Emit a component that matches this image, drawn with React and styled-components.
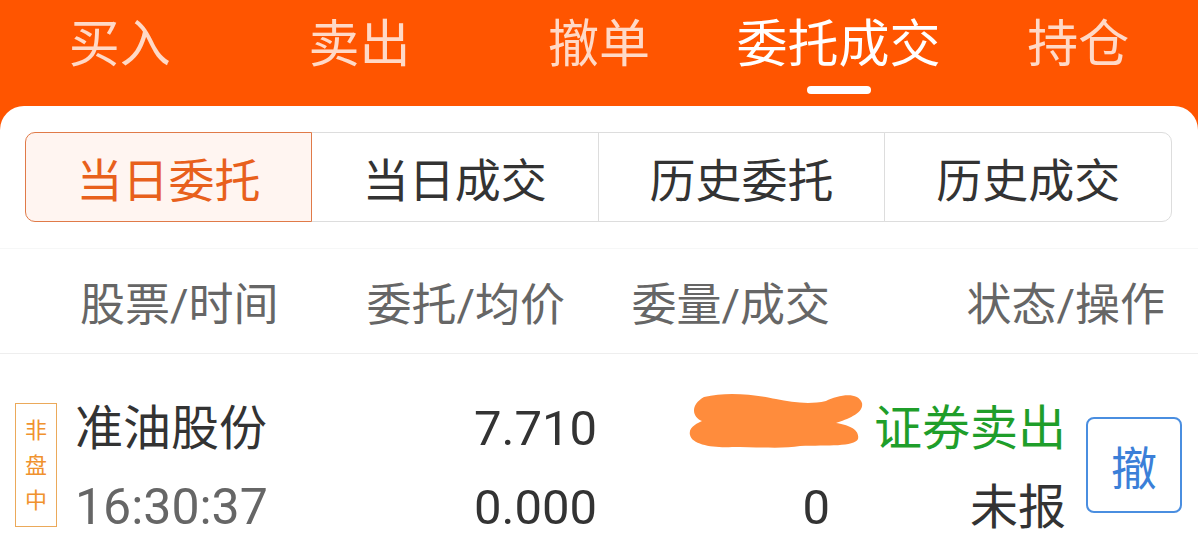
import React from 'react'
import styled, { createGlobalStyle } from 'styled-components'

const GlobalStyle = createGlobalStyle`
  html, body {
    margin: 0;
    padding: 0;
    background: #ffffff;
  }
  body {
    font-family: Roboto, "Noto Sans CJK SC", sans-serif;
  }
`

const Page = styled.div`
  width: 1198px;
  height: 558px;
  overflow: hidden;
  background: #ff5500;
  display: flex;
  flex-direction: column;
`

const TopTabs = styled.div`
  display: grid;
  grid-template-columns: repeat(5, 1fr);
  height: 106px;
  flex-shrink: 0;
`

const TopTab = styled.div`
  display: flex;
  flex-direction: column;
  align-items: center;
  padding-top: 20px;
  color: ${p => (p.active ? '#ffffff' : 'rgba(255, 255, 255, 0.78)')};
  font-size: 51px;
  line-height: 50px;
`

const Indicator = styled.div`
  margin-top: 16px;
  width: 64px;
  height: 8px;
  border-radius: 4px;
  background: ${p => (p.visible ? '#ffffff' : 'transparent')};
`

const Card = styled.div`
  flex: 1;
  background: #ffffff;
  border-radius: 24px 24px 0 0;
  display: flex;
  flex-direction: column;
`

const SegmentWrap = styled.div`
  padding: 26px 26px 26px 25px;
`

const Segments = styled.div`
  display: grid;
  grid-template-columns: repeat(4, 1fr);
  height: 90px;
`

const Segment = styled.div`
  display: flex;
  align-items: center;
  justify-content: center;
  font-size: 46px;
  color: ${p => (p.active ? '#e8601c' : '#333333')};
  background: ${p => (p.active ? '#fff5f1' : '#ffffff')};
  border: 1px solid ${p => (p.active ? '#e07a48' : '#dddddd')};
  margin-left: ${p => (p.first ? '0' : '-1px')};
  position: relative;
  z-index: ${p => (p.active ? 1 : 0)};
  border-radius: ${p => (p.first ? '10px 0 0 10px' : p.last ? '0 10px 10px 0' : '0')};
`

const HeaderRow = styled.div`
  display: grid;
  grid-template-columns: 210px 275px 265px 335px;
  align-items: center;
  height: 104px;
  padding-left: 80px;
  border-top: 1px solid #f6f7f7;
  border-bottom: 1px solid #eeeeee;
  color: #666666;
  font-size: 45px;
`

const HeadCell = styled.div`
  text-align: ${p => p.align || 'left'};
  white-space: nowrap;
`

const DataRow = styled.div`
  display: flex;
  align-items: flex-start;
  padding: 35px 0 0 15px;
`

const Badge = styled.div`
  width: 40px;
  height: 122px;
  margin-top: 14px;
  border: 1px solid #eba95a;
  display: flex;
  flex-direction: column;
  align-items: center;
  justify-content: center;
  color: #f0922e;
  font-size: 22px;
  line-height: 35px;
`

const Col = styled.div`
  width: ${p => p.width}px;
  margin-left: ${p => p.gap || 0}px;
  display: flex;
  flex-direction: column;
  align-items: ${p => (p.right ? 'flex-end' : 'flex-start')};
  position: relative;
`

const Line = styled.div`
  height: 79px;
  line-height: 79px;
  font-size: ${p => p.size || 48}px;
  color: ${p => p.color || '#333333'};
  white-space: nowrap;
`

const Redact = styled.svg`
  position: absolute;
  top: 2px;
  right: -36px;
`

const CancelButton = styled.div`
  margin: 28px 0 0 20px;
  width: 92px;
  height: 92px;
  border: 2px solid #4a8ee0;
  border-radius: 8px;
  display: flex;
  align-items: center;
  justify-content: center;
  color: #3b7fd8;
  font-size: 46px;
`

const topTabs = ['买入', '卖出', '撤单', '委托成交', '持仓']
const segments = ['当日委托', '当日成交', '历史委托', '历史成交']

export default function App() {
  return (
    <Page>
      <GlobalStyle />
      <TopTabs>
        {topTabs.map((t, i) => (
          <TopTab key={t} active={i === 3}>
            <div>{t}</div>
            <Indicator visible={i === 3} />
          </TopTab>
        ))}
      </TopTabs>
      <Card>
        <SegmentWrap>
          <Segments>
            {segments.map((s, i) => (
              <Segment key={s} active={i === 0} first={i === 0} last={i === segments.length - 1}>
                {s}
              </Segment>
            ))}
          </Segments>
        </SegmentWrap>
        <HeaderRow>
          <HeadCell>股票/时间</HeadCell>
          <HeadCell align='right'>委托/均价</HeadCell>
          <HeadCell align='right'>委量/成交</HeadCell>
          <HeadCell align='right'>状态/操作</HeadCell>
        </HeaderRow>
        <DataRow>
          <Badge>
            <span>非</span>
            <span>盘</span>
            <span>中</span>
          </Badge>
          <Col width={300} gap={18}>
            <Line>准油股份</Line>
            <Line color='#666666' size={50}>16:30:37</Line>
          </Col>
          <Col width={222} right>
            <Line size={49}>7.710</Line>
            <Line size={49}>0.000</Line>
          </Col>
          <Col width={233} right>
            <Line />
            <Line size={49}>0</Line>
            <Redact width='178' height='58' viewBox='0 0 178 58'>
              <path
                d='M16 6 C40 0 70 4 88 8 C104 11 120 14 138 10 C150 4 170 0 174 12 C176 22 160 28 148 32 C160 34 172 38 170 48 C166 56 140 54 112 55 C96 58 70 56 44 56 C26 57 4 54 2 44 C0 36 10 32 14 30 C4 26 2 14 16 6 Z'
                fill='#ff8c3c'
              />
            </Redact>
          </Col>
          <Col width={236} right>
            <Line color='#1f9e2a'>证券卖出</Line>
            <Line>未报</Line>
          </Col>
          <CancelButton>撤</CancelButton>
        </DataRow>
      </Card>
    </Page>
  )
}
